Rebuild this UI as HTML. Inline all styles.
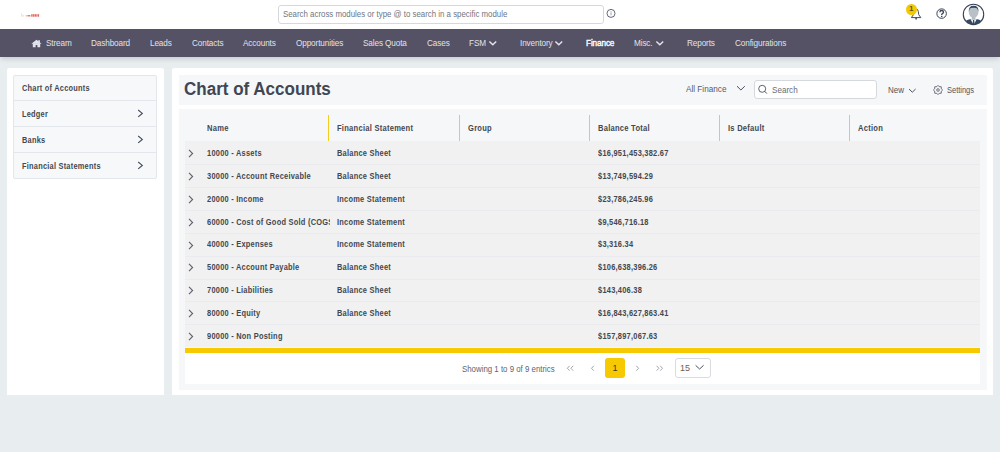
<!DOCTYPE html>
<html><head><meta charset="utf-8">
<style>
*{box-sizing:border-box;margin:0;padding:0}
html,body{width:1000px;height:452px;overflow:hidden;background:#e8edf0;font-family:"Liberation Sans",sans-serif;color:#3b3f47}
.abs{position:absolute}
#top{left:0;top:0;width:1000px;height:29px;background:#fff}
#nav{left:0;top:29px;width:1000px;height:28px;background:#545264;box-shadow:0 3px 5px -1px rgba(0,0,0,.14)}
.ni{position:absolute;top:38.9px;font-size:8.2px;letter-spacing:-0.12px;color:#e2e2ea;white-space:nowrap;line-height:10px}
.panel{background:#fff;border-radius:2px 2px 0 0}
.side{left:13px;top:75px;width:144px;height:104px;border:1px solid #e3e6ea;border-radius:2px;background:#f7f8fa}
.srow{position:absolute;left:0;width:142px;height:26px;border-top:1px solid #e3e6ea}
.stxt{position:absolute;left:8px;font-size:9px;font-weight:bold;color:#43484f;white-space:nowrap;line-height:10px;letter-spacing:0.3px;transform:scaleX(0.82);transform-origin:0 0}
.chev{position:absolute}
.th{position:absolute;top:123px;font-size:9px;font-weight:bold;color:#43484f;white-space:nowrap;line-height:10px;letter-spacing:0.3px;transform:scaleX(0.84);transform-origin:0 0}
.sep{position:absolute;top:114.5px;width:1px;height:27px;background:#f5cd1e}
.row{position:absolute;left:185px;width:795px;height:23px;background:#f1f1f1;border-top:1px solid #e9ebee}
.td{position:absolute;top:5.7px;font-size:9px;font-weight:bold;color:#43484f;white-space:nowrap;line-height:10px;letter-spacing:0.3px;transform:scaleX(0.825);transform-origin:0 0}
</style></head><body>
<div id="top" class="abs">
  <svg class="abs" style="left:20px;top:12px" width="21" height="6" viewBox="0 0 21 6"><path d="M1.2 1.4 Q2.4 2.6 1.6 4.6 M2.8 3 Q3.6 3.6 3 4.8" stroke="#f0a8a0" stroke-width="0.5" fill="none"/><rect x="5.6" y="3.2" width="1.2" height="1.2" fill="#f0a098"/><rect x="7.4" y="3.0" width="3" height="1.5" fill="#e87a70"/><g fill="#e46a5f"><rect x="11.2" y="2.2" width="1.4" height="2.5"/><rect x="12.9" y="2.2" width="1.4" height="2.5"/><rect x="14.6" y="2.2" width="1.4" height="2.5"/><rect x="16.3" y="2.2" width="1.3" height="2.5"/><rect x="17.9" y="2.2" width="1.2" height="2.5"/></g></svg>
  <div class="abs" style="left:278px;top:5px;width:326px;height:19px;border:1px solid #d5d9de;border-radius:3px;background:#fff"></div>
  <div class="abs" style="left:283px;top:9px;font-size:8.6px;color:#6f7580;white-space:nowrap;line-height:10px;transform:scaleX(0.915);transform-origin:0 0">Search across modules or type @ to search in a specific module</div>
</div>
<div id="nav" class="abs"></div>
<!-- nav items -->
<div class="ni" style="left:46px;top:39.4px">Stream</div>
<div class="ni" style="left:91px">Dashboard</div>
<div class="ni" style="left:150px">Leads</div>
<div class="ni" style="left:192px">Contacts</div>
<div class="ni" style="left:243px">Accounts</div>
<div class="ni" style="left:296px">Opportunities</div>
<div class="ni" style="left:363px">Sales Quota</div>
<div class="ni" style="left:427px">Cases</div>
<div class="ni" style="left:469px">FSM</div>
<div class="ni" style="left:520px">Inventory</div>
<div class="ni" style="left:586px;color:#fff;-webkit-text-stroke:0.35px #fff">Finance</div>
<div class="ni" style="left:634px">Misc.</div>
<div class="ni" style="left:687px">Reports</div>
<div class="ni" style="left:735px">Configurations</div>

<!-- left panel -->
<div class="abs panel" style="left:7px;top:68px;width:157px;height:327px"></div>
<div class="abs side">
  <div class="srow" style="top:-1px;border-top:none"><div class="stxt" style="top:7.6px">Chart of Accounts</div></div>
  <div class="srow" style="top:24px"><div class="stxt" style="top:7.6px">Ledger</div></div>
  <div class="srow" style="top:50px"><div class="stxt" style="top:7.6px">Banks</div></div>
  <div class="srow" style="top:76px"><div class="stxt" style="top:7.6px">Financial Statements</div></div>
</div>

<!-- right panel -->
<div class="abs panel" style="left:172px;top:68px;width:821px;height:327px"></div>
<div class="abs" style="left:179px;top:75px;width:808px;height:30px;background:#f6f7f9"></div>
<div class="abs" style="left:183.7px;top:78px;font-size:18px;letter-spacing:0px;font-weight:bold;color:#404652;line-height:22px;white-space:nowrap;transform:scaleX(0.945);transform-origin:0 0">Chart of Accounts</div>
<div class="abs" style="left:686px;top:83.5px;font-size:8.8px;color:#555b67;line-height:10px;white-space:nowrap;transform:scaleX(0.93);transform-origin:0 0">All Finance</div>
<div class="abs" style="left:754px;top:80px;width:123px;height:18.5px;border:1px solid #d5d9de;border-radius:3px;background:#fff"></div>
<div class="abs" style="left:772px;top:85px;font-size:8.8px;color:#666c77;line-height:10px;white-space:nowrap;transform:scaleX(0.92);transform-origin:0 0">Search</div>
<div class="abs" style="left:888px;top:85px;font-size:8.6px;color:#4f5560;line-height:10px;white-space:nowrap;transform:scaleX(0.93);transform-origin:0 0">New</div>
<div class="abs" style="left:947px;top:85px;font-size:8.6px;color:#4f5560;line-height:10px;white-space:nowrap;transform:scaleX(0.87);transform-origin:0 0">Settings</div>

<div class="abs" style="left:179px;top:109px;width:808px;height:281px;background:#f6f7f9"></div>
<div class="th" style="left:207px">Name</div>
<div class="sep" style="left:328px"></div><div class="th" style="left:337px">Financial Statement</div>
<div class="sep" style="left:459px"></div><div class="th" style="left:468px">Group</div>
<div class="sep" style="left:589px"></div><div class="th" style="left:598px">Balance Total</div>
<div class="sep" style="left:719px"></div><div class="th" style="left:728px">Is Default</div>
<div class="sep" style="left:849px"></div><div class="th" style="left:858px">Action</div>

<div id="rows">
<div class="row" style="top:141.300px;border-top-color:transparent"><svg class="chev" style="left:3px;top:6.8px" width="6" height="9" viewBox="0 0 6 9"><path d="M1 0.8 L4.6 4.5 L1 8.2" fill="none" stroke="#5a6170" stroke-width="1.1"/></svg><div class="td" style="left:22px;width:148.5px;overflow:hidden">10000 - Assets</div><div class="td" style="left:152px">Balance Sheet</div><div class="td" style="left:413px">$16,951,453,382.67</div></div>
<div class="row" style="top:164.175px"><svg class="chev" style="left:3px;top:6.8px" width="6" height="9" viewBox="0 0 6 9"><path d="M1 0.8 L4.6 4.5 L1 8.2" fill="none" stroke="#5a6170" stroke-width="1.1"/></svg><div class="td" style="left:22px;width:148.5px;overflow:hidden">30000 - Account Receivable</div><div class="td" style="left:152px">Balance Sheet</div><div class="td" style="left:413px">$13,749,594.29</div></div>
<div class="row" style="top:187.050px"><svg class="chev" style="left:3px;top:6.8px" width="6" height="9" viewBox="0 0 6 9"><path d="M1 0.8 L4.6 4.5 L1 8.2" fill="none" stroke="#5a6170" stroke-width="1.1"/></svg><div class="td" style="left:22px;width:148.5px;overflow:hidden">20000 - Income</div><div class="td" style="left:152px">Income Statement</div><div class="td" style="left:413px">$23,786,245.96</div></div>
<div class="row" style="top:209.925px"><svg class="chev" style="left:3px;top:6.8px" width="6" height="9" viewBox="0 0 6 9"><path d="M1 0.8 L4.6 4.5 L1 8.2" fill="none" stroke="#5a6170" stroke-width="1.1"/></svg><div class="td" style="left:22px;width:148.5px;overflow:hidden">60000 - Cost of Good Sold (COGS)</div><div class="td" style="left:152px">Income Statement</div><div class="td" style="left:413px">$9,546,716.18</div></div>
<div class="row" style="top:232.800px"><svg class="chev" style="left:3px;top:6.8px" width="6" height="9" viewBox="0 0 6 9"><path d="M1 0.8 L4.6 4.5 L1 8.2" fill="none" stroke="#5a6170" stroke-width="1.1"/></svg><div class="td" style="left:22px;width:148.5px;overflow:hidden">40000 - Expenses</div><div class="td" style="left:152px">Income Statement</div><div class="td" style="left:413px">$3,316.34</div></div>
<div class="row" style="top:255.675px"><svg class="chev" style="left:3px;top:6.8px" width="6" height="9" viewBox="0 0 6 9"><path d="M1 0.8 L4.6 4.5 L1 8.2" fill="none" stroke="#5a6170" stroke-width="1.1"/></svg><div class="td" style="left:22px;width:148.5px;overflow:hidden">50000 - Account Payable</div><div class="td" style="left:152px">Balance Sheet</div><div class="td" style="left:413px">$106,638,396.26</div></div>
<div class="row" style="top:278.550px"><svg class="chev" style="left:3px;top:6.8px" width="6" height="9" viewBox="0 0 6 9"><path d="M1 0.8 L4.6 4.5 L1 8.2" fill="none" stroke="#5a6170" stroke-width="1.1"/></svg><div class="td" style="left:22px;width:148.5px;overflow:hidden">70000 - Liabilities</div><div class="td" style="left:152px">Balance Sheet</div><div class="td" style="left:413px">$143,406.38</div></div>
<div class="row" style="top:301.425px"><svg class="chev" style="left:3px;top:6.8px" width="6" height="9" viewBox="0 0 6 9"><path d="M1 0.8 L4.6 4.5 L1 8.2" fill="none" stroke="#5a6170" stroke-width="1.1"/></svg><div class="td" style="left:22px;width:148.5px;overflow:hidden">80000 - Equity</div><div class="td" style="left:152px">Balance Sheet</div><div class="td" style="left:413px">$16,843,627,863.41</div></div>
<div class="row" style="top:324.300px"><svg class="chev" style="left:3px;top:6.8px" width="6" height="9" viewBox="0 0 6 9"><path d="M1 0.8 L4.6 4.5 L1 8.2" fill="none" stroke="#5a6170" stroke-width="1.1"/></svg><div class="td" style="left:22px;width:148.5px;overflow:hidden">90000 - Non Posting</div><div class="td" style="left:152px"></div><div class="td" style="left:413px">$157,897,067.63</div></div>
</div>
<div class="abs" style="left:185px;top:348px;width:795px;height:5px;background:#f6c900"></div>
<div class="abs" style="left:185px;top:353px;width:795px;height:31px;background:#fff"></div>
<div class="abs" style="left:461.5px;top:363.5px;font-size:8.6px;color:#5d6470;line-height:10px;white-space:nowrap;transform:scaleX(0.915);transform-origin:0 0">Showing 1 to 9 of 9 entrics</div>
<div class="abs" style="left:605px;top:358px;width:20px;height:20px;background:#f6c900;border-radius:3px;font-size:9px;color:#3d3a2a;text-align:center;line-height:20px">1</div>
<div class="abs" style="left:675px;top:358px;width:36px;height:20px;border:1px solid #d8dce0;border-radius:3px;background:#fff"></div>
<div class="abs" style="left:680px;top:363px;font-size:9px;color:#6a5f55;line-height:10px">15</div>

<!-- ICONS -->
<svg class="abs" style="left:31px;top:39px" width="11" height="9" viewBox="0 0 11 9"><path d="M0.4 4.7 L5.5 0.7 L10.6 4.7 Z" fill="#e4e4ee"/><rect x="7.3" y="1.2" width="1.6" height="2.6" fill="#e4e4ee"/><path d="M1.8 4.3 L9.2 4.3 L9.2 8.3 L6.4 8.3 L6.4 5.9 L4.6 5.9 L4.6 8.3 L1.8 8.3 Z" fill="#e4e4ee"/></svg>
<svg class="abs" style="left:488px;top:40px" width="10" height="7" viewBox="0 0 10 7"><path d="M1.4 1.4 L4.8 4.8 L8.2 1.4" fill="none" stroke="#e2e4ee" stroke-width="1.45"/></svg>
<svg class="abs" style="left:554px;top:40px" width="10" height="7" viewBox="0 0 10 7"><path d="M1.4 1.4 L4.8 4.8 L8.2 1.4" fill="none" stroke="#e2e4ee" stroke-width="1.45"/></svg>
<svg class="abs" style="left:655px;top:40px" width="10" height="7" viewBox="0 0 10 7"><path d="M1.4 1.4 L4.8 4.8 L8.2 1.4" fill="none" stroke="#e2e4ee" stroke-width="1.45"/></svg>
<!-- info -->
<svg class="abs" style="left:605px;top:7px" width="12" height="12" viewBox="0 0 12 12"><circle cx="6" cy="6.4" r="4" fill="none" stroke="#3e4452" stroke-width="0.8"/><rect x="5.65" y="5.3" width="0.75" height="3" fill="#7a7f88"/><rect x="5.65" y="4.1" width="0.75" height="0.7" fill="#7a7f88"/></svg>
<!-- bell -->
<svg class="abs" style="left:909px;top:6px" width="14" height="15" viewBox="0 0 14 15"><path d="M2.4 11.6 L4.5 8.6 L4.9 5.4 Q5.3 3 7.1 3 Q8.9 3 9.3 5.4 L9.7 8.6 L11.8 11.6 Z" fill="none" stroke="#3a4253" stroke-width="0.95" stroke-linejoin="round"/><circle cx="7.1" cy="12.7" r="0.85" fill="#3a4253"/></svg>
<div class="abs" style="left:906px;top:4px;width:10.5px;height:10.5px;border-radius:50%;background:#f5c800;font-size:8px;font-weight:bold;line-height:10.5px;text-align:center;color:#5d5a2c">1</div>
<!-- help -->
<svg class="abs" style="left:935px;top:6.5px" width="14" height="14" viewBox="0 0 14 14"><circle cx="6.6" cy="6.6" r="4.75" fill="none" stroke="#3a4253" stroke-width="1"/><path d="M4.9 5.3 Q4.9 3.5 6.7 3.5 Q8.5 3.5 8.5 5.1 Q8.5 6.1 7.4 6.6 Q6.7 6.9 6.7 8.1" fill="none" stroke="#3a4253" stroke-width="1.35"/><rect x="6" y="8.8" width="1.4" height="1.3" fill="#3a4253"/></svg>
<!-- avatar -->
<svg class="abs" style="left:962px;top:3px" width="23" height="23" viewBox="0 0 23 23"><defs><clipPath id="cc"><circle cx="11.5" cy="11.4" r="10.2"/></clipPath></defs><circle cx="11.5" cy="11.4" r="10.2" fill="#fff"/><g clip-path="url(#cc)"><path d="M0.5 24 Q1.5 17.6 7.6 16.2 L15.6 16.2 Q21.6 17.6 22.6 24 Z" fill="#2e4a66"/><path d="M8.6 16.2 L14.6 16.2 L11.6 22 Z" fill="#fff"/><path d="M11 17 L12.2 17 L12.7 22.3 L11.6 23.4 L10.5 22.3 Z" fill="#2e4a66"/><rect x="9.8" y="12.5" width="3.6" height="4" fill="#b2bac2"/><path d="M6.6 7.6 Q6.6 2.9 11.6 2.9 Q16.6 2.9 16.6 7.6 L16.3 10.2 Q15.5 14.4 11.6 14.7 Q7.7 14.4 6.9 10.2 Z" fill="#b9c0c7"/><path d="M6.9 8.6 Q6.5 2.8 11.6 2.8 Q16.7 2.8 16.3 8.6 Q15.9 5.6 14.4 5.1 Q11.6 4.4 8.8 5.1 Q7.3 5.6 6.9 8.6 Z" fill="#2e4a66"/></g><circle cx="11.5" cy="11.4" r="10.2" fill="none" stroke="#3b4152" stroke-width="1.1"/></svg>
<!-- toolbar -->
<svg class="abs" style="left:736px;top:85px" width="10" height="7" viewBox="0 0 10 7"><path d="M1 1.2 L4.9 5 L8.8 1.2" fill="none" stroke="#4a5262" stroke-width="1"/></svg>
<svg class="abs" style="left:757px;top:84px" width="11" height="11" viewBox="0 0 11 11"><circle cx="5.2" cy="4.8" r="3.5" fill="none" stroke="#4a5262" stroke-width="0.9"/><path d="M7.7 7.3 L9.9 9.6" stroke="#4a5262" stroke-width="1"/></svg>
<svg class="abs" style="left:908px;top:87.5px" width="9" height="6" viewBox="0 0 9 6"><path d="M1 1 L4.3 4.2 L7.6 1" fill="none" stroke="#4a5262" stroke-width="1"/></svg>
<svg class="abs" style="left:931.6px;top:83.6px" width="12" height="12" viewBox="-6 -6 12 12"><path d="M0 -4.6 L1.2 -3.3 L3.25 -3.25 L3.3 -1.2 L4.6 0 L3.3 1.2 L3.25 3.25 L1.2 3.3 L0 4.6 L-1.2 3.3 L-3.25 3.25 L-3.3 1.2 L-4.6 0 L-3.3 -1.2 L-3.25 -3.25 L-1.2 -3.3 Z" fill="none" stroke="#4a5262" stroke-width="0.8" stroke-linejoin="miter"/><circle cx="0" cy="0" r="1.3" fill="none" stroke="#4a5262" stroke-width="0.8"/></svg>
<!-- sidebar chevrons -->
<svg class="abs" style="left:136px;top:109px" width="8" height="9" viewBox="0 0 8 9"><path d="M2.2 1 L6.3 4.4 L2.2 7.8" fill="none" stroke="#414958" stroke-width="1.1"/></svg>
<svg class="abs" style="left:136px;top:135px" width="8" height="9" viewBox="0 0 8 9"><path d="M2.2 1 L6.3 4.4 L2.2 7.8" fill="none" stroke="#414958" stroke-width="1.1"/></svg>
<svg class="abs" style="left:136px;top:161px" width="8" height="9" viewBox="0 0 8 9"><path d="M2.2 1 L6.3 4.4 L2.2 7.8" fill="none" stroke="#414958" stroke-width="1.1"/></svg>
<!-- pagination arrows -->
<svg class="abs" style="left:565px;top:364px" width="11" height="8" viewBox="0 0 11 8"><path d="M4.6 1.8 L2.3 4.3 L4.6 6.7 M8.2 1.8 L5.9 4.3 L8.2 6.7" fill="none" stroke="#a0a6ae" stroke-width="1"/></svg>
<svg class="abs" style="left:589px;top:364px" width="7" height="8" viewBox="0 0 7 8"><path d="M4.8 1.8 L2.5 4.3 L4.8 6.7" fill="none" stroke="#a0a6ae" stroke-width="1"/></svg>
<svg class="abs" style="left:634px;top:364px" width="7" height="8" viewBox="0 0 7 8"><path d="M2.3 1.8 L4.6 4.3 L2.3 6.7" fill="none" stroke="#a0a6ae" stroke-width="1"/></svg>
<svg class="abs" style="left:654px;top:364px" width="11" height="8" viewBox="0 0 11 8"><path d="M2.6 1.8 L4.9 4.3 L2.6 6.7 M6.2 1.8 L8.5 4.3 L6.2 6.7" fill="none" stroke="#a0a6ae" stroke-width="1"/></svg>
<svg class="abs" style="left:694px;top:364px" width="11" height="7" viewBox="0 0 11 7"><path d="M1.6 1.3 L5.6 5 L9.6 1.3" fill="none" stroke="#4a5262" stroke-width="1"/></svg>
</body></html>
